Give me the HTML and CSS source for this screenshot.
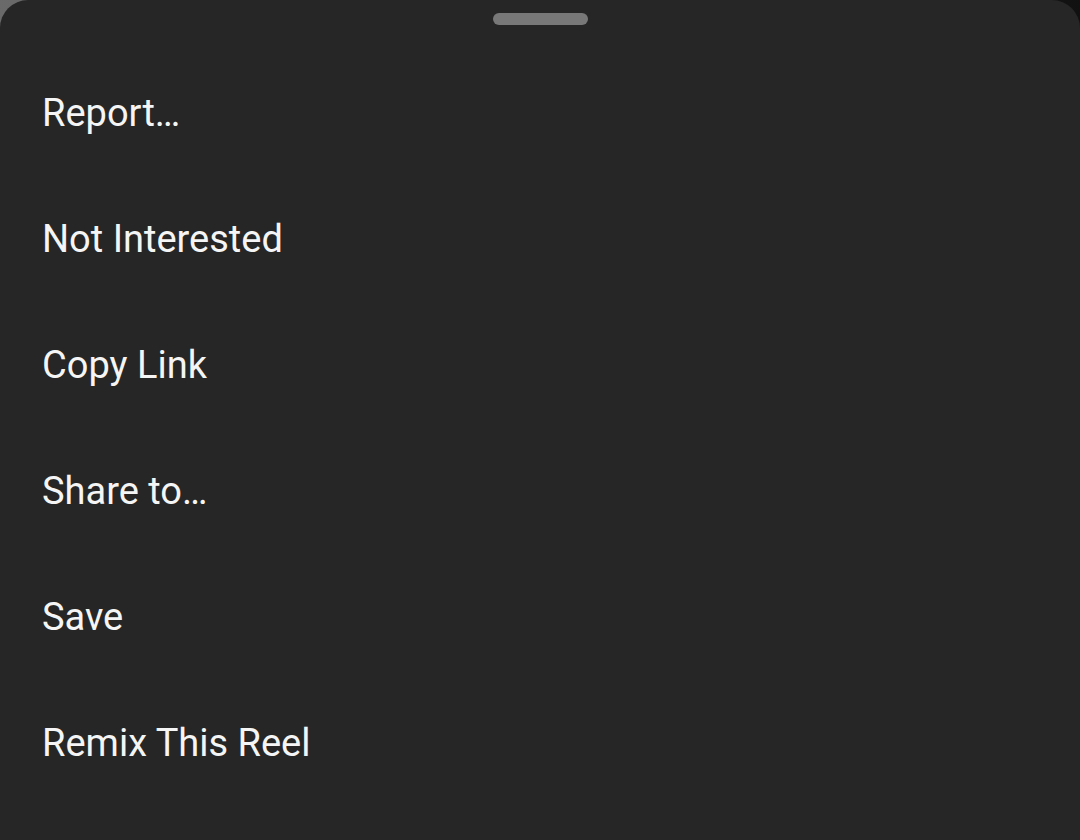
FILE: index.html
```html
<!DOCTYPE html>
<html>
<head>
<meta charset="utf-8">
<link rel="stylesheet" href="styles.css">
</head>
<body>
<div class="backdrop">
  <div class="sheet">
    <div class="handle-row"><div class="handle"></div></div>
    <ul class="menu">
      <li class="item">Report…</li>
      <li class="item">Not Interested</li>
      <li class="item">Copy Link</li>
      <li class="item">Share to…</li>
      <li class="item">Save</li>
      <li class="item">Remix This Reel</li>
    </ul>
  </div>
</div>
</body>
</html>
```
FILE: styles.css
```css
html, body {
  margin: 0;
  padding: 0;
  width: 1080px;
  height: 840px;
  overflow: hidden;
}
.backdrop {
  width: 1080px;
  height: 840px;
  background: linear-gradient(90deg, #6a6a6a 0%, #111 100%);
}
.sheet {
  width: 1080px;
  height: 840px;
  background: #262626;
  border-radius: 28px 28px 0 0;
  font-family: Roboto, "Liberation Sans", sans-serif;
  color: #f5f5f5;
}
.handle-row {
  display: flex;
  justify-content: center;
  padding-top: 13px;
  height: 50px;
  box-sizing: border-box;
}
.handle {
  width: 95px;
  height: 12px;
  border-radius: 6px;
  background: #787878;
}
.menu {
  list-style: none;
  margin: 0;
  padding: 0 0 0 42px;
}
.item {
  height: 126px;
  line-height: 126px;
  font-size: 38px;
  font-weight: 400;
  white-space: nowrap;
}
```
